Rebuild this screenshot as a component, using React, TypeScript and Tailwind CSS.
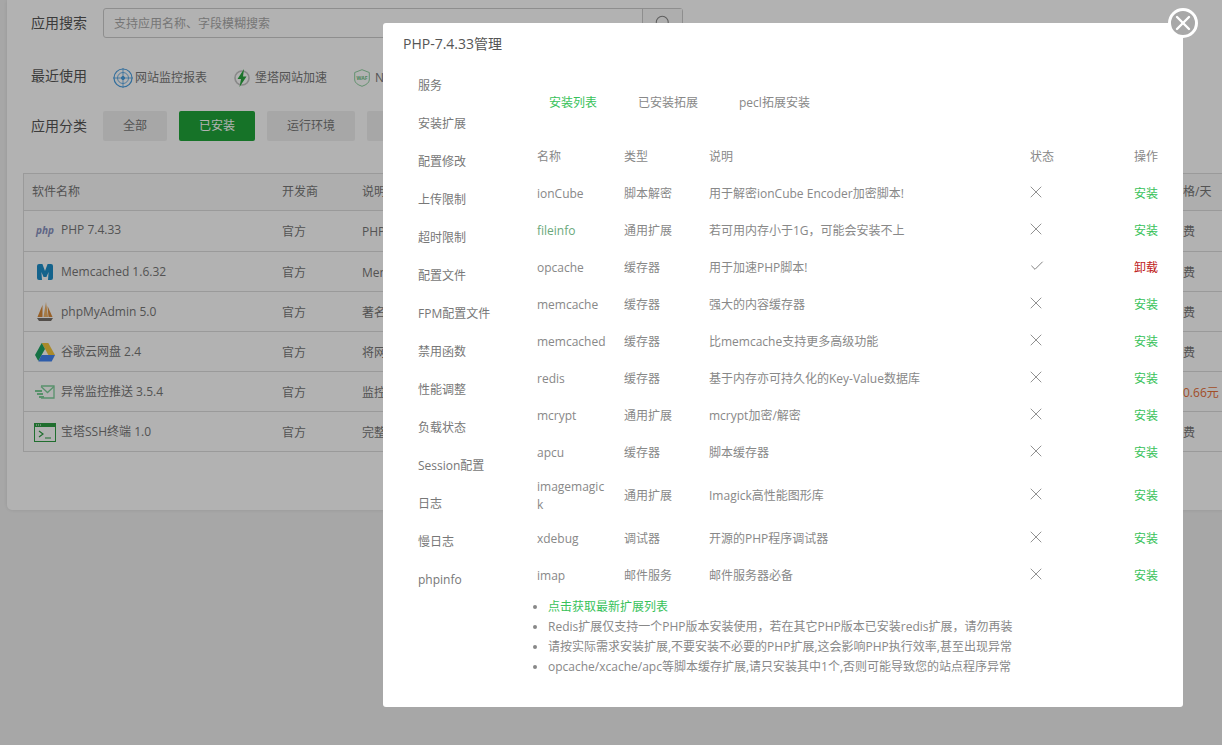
import { Check, Search, X } from 'lucide-react';

const menu = ['服务', '安装扩展', '配置修改', '上传限制', '超时限制', '配置文件', 'FPM配置文件', '禁用函数', '性能调整', '负载状态', 'Session配置', '日志', '慢日志', 'phpinfo'];

const exts = [
  { name: 'ionCube', type: '脚本解密', desc: '用于解密ionCube Encoder加密脚本!', on: false },
  { name: 'fileinfo', type: '通用扩展', desc: '若可用内存小于1G，可能会安装不上', on: false },
  { name: 'opcache', type: '缓存器', desc: '用于加速PHP脚本!', on: true },
  { name: 'memcache', type: '缓存器', desc: '强大的内容缓存器', on: false },
  { name: 'memcached', type: '缓存器', desc: '比memcache支持更多高级功能', on: false },
  { name: 'redis', type: '缓存器', desc: '基于内存亦可持久化的Key-Value数据库', on: false },
  { name: 'mcrypt', type: '通用扩展', desc: 'mcrypt加密/解密', on: false },
  { name: 'apcu', type: '缓存器', desc: '脚本缓存器', on: false },
  { name: 'imagemagick', type: '通用扩展', desc: 'Imagick高性能图形库', on: false },
  { name: 'xdebug', type: '调试器', desc: '开源的PHP程序调试器', on: false },
  { name: 'imap', type: '邮件服务', desc: '邮件服务器必备', on: false },
];

const PhpIcon = () => <span className="text-[10px] leading-none font-bold italic text-[#8892bf]">php</span>;

const MemIcon = () => (
  <svg width="16" height="16" viewBox="0 0 16 16">
    <path d="M2 0h3.4L8 7l2.6-7H14q2 0 2 2v12q0 2-2 2h-3l.6-8L9.4 13H6.6L4.4 8l.6 8H2q-2 0-2-2V2q0-2 2-2z" fill="#1d8ec9" />
  </svg>
);

const SailIcon = () => (
  <svg width="16" height="20" viewBox="0 0 16 20">
    <path d="M5.5 3 0.5 15h5z" fill="#d98a3a" />
    <path d="M9 0 6.5 15H11z" fill="#eeb065" />
    <path d="M10.5 4l5 11h-4z" fill="#d98a3a" />
    <path d="M0 16h16l-2 3H2z" fill="#77706a" />
  </svg>
);

const DriveIcon = () => (
  <svg width="20" height="19" viewBox="0 0 20 19">
    <path d="M6.7 0h6.6L20 12h-6.6z" fill="#f4c63d" />
    <path d="M6.7 0 0 12l3.3 6L10 6z" fill="#1fa463" />
    <path d="M6.5 12H20l-3.3 6.5H3.3z" fill="#4285f4" />
  </svg>
);

const MailIcon = () => (
  <svg width="20" height="17" viewBox="0 0 20 17" fill="none">
    <path d="M6 2h13v12H6" stroke="#7fd09a" strokeWidth="1.3" />
    <path d="M6 2.5l6.5 6 6.5-6" stroke="#7fd09a" strokeWidth="1.3" />
    <path d="M0 7h7M2 10h6M4 13h5" stroke="#7fd09a" strokeWidth="2" />
  </svg>
);

const TermIcon = () => (
  <svg width="22" height="19" viewBox="0 0 22 19" fill="none">
    <rect x=".5" y=".5" width="21" height="18" stroke="#2f9e44" fill="#fff" />
    <rect x="0" y="0" width="22" height="4" fill="#2f9e44" />
    <path d="M2 2h1M4 2h1M6 2h1" stroke="#fff" />
    <path d="M5 8l4 3-4 3M11 15h6" stroke="#2f9e44" strokeWidth="1.2" />
  </svg>
);

const RadarIcon = () => (
  <svg width="20" height="20" viewBox="0 0 20 20" fill="none" stroke="#4a9fe0">
    <circle cx="10" cy="10" r="9" strokeWidth="1.2" />
    <circle cx="10" cy="10" r="5.5" strokeWidth=".8" />
    <circle cx="10" cy="10" r="1.6" fill="#4a9fe0" />
    <path d="M0 10h20M10 0v20" strokeWidth=".8" />
  </svg>
);

const BoltIcon = () => (
  <svg width="16" height="18" viewBox="0 0 16 18" fill="none">
    <circle cx="8" cy="9" r="7" stroke="#c4c4c4" strokeWidth="1.6" />
    <path d="M10 0 3.5 10H7l-1.5 8L12.5 7.5H9z" fill="#2aa63f" />
  </svg>
);

const WafIcon = () => (
  <svg width="16" height="18" viewBox="0 0 16 18" fill="none">
    <path d="M8 .7 15.3 3.5v7.5Q15 15 8 17.3 1 15 .7 11V3.5z" stroke="#8fd0a0" />
    <text x="8" y="11" textAnchor="middle" fontSize="5" fontWeight="700" fill="#6cbf83">WAF</text>
  </svg>
);

const softRows = [
  { icon: <PhpIcon />, name: 'PHP 7.4.33', desc: 'PHP是世界上最好的编程语言', price: '免费', h: 'h-[41px]', pad: 'pb-[2px]' },
  { icon: <MemIcon />, name: 'Memcached 1.6.32', desc: 'Memcached 是一个高性能的分布式内存对象缓存系统', price: '免费', h: 'h-[40px]', pad: 'pt-px' },
  { icon: <SailIcon />, name: 'phpMyAdmin 5.0', desc: '著名Web端MySQL管理工具', price: '免费', h: 'h-[40px]', pad: 'pt-px' },
  { icon: <DriveIcon />, name: '谷歌云网盘 2.4', desc: '将网站或数据库打包备份到谷歌云网盘', price: '免费', h: 'h-[40px]', pad: 'pt-px' },
  { icon: <MailIcon />, name: '异常监控推送 3.5.4', desc: '监控服务器异常并推送通知', price: '￥0.66元', red: true, h: 'h-[40px]', pad: 'pt-px' },
  { icon: <TermIcon />, name: '宝塔SSH终端 1.0', desc: '完整功能的SSH客户端', price: '免费', h: 'h-[40px]', pad: 'pt-px' },
];

export default function App() {
  return (
    <div className="relative h-[745px] w-[1222px] overflow-hidden bg-[#f0f0f0] pl-[7px] font-['Open_Sans','Noto_Sans_CJK_SC',sans-serif] text-xs text-[#777]">
      {/* page behind the dialog */}
      <div className="h-[510px] w-[1300px] rounded-b-[5px] bg-white pt-2 pl-6 shadow-[0_0_4px_rgba(0,0,0,0.1)]">
        <div className="flex h-[30px] items-center">
          <span className="w-[72px] text-sm text-[#555]">应用搜索</span>
          <div className="flex h-[30px] w-[580px] rounded-[3px] border border-[#ccc]">
            <input className="min-w-0 flex-1 pt-px pl-[10px] text-xs outline-none placeholder:text-[#aaa]" placeholder="支持应用名称、字段模糊搜索" />
            <div className="flex w-[40px] items-center justify-center border-l border-[#ccc] bg-[#fafafa]">
              <Search size={18} strokeWidth={1.4} color="#888" />
            </div>
          </div>
        </div>

        <div className="mt-[23px] flex h-[30px] items-center">
          <span className="w-[72px] text-sm text-[#555]">最近使用</span>
          <div className="ml-[10px] flex gap-[27px] pt-1">
            <span className="flex items-center gap-[2px]"><RadarIcon />网站监控报表</span>
            <span className="flex items-center gap-[5px]"><BoltIcon />堡塔网站加速</span>
            <span className="flex items-center gap-[5px]"><WafIcon />Nginx防火墙</span>
          </div>
        </div>

        <div className="mt-5 flex h-[30px] items-center">
          <span className="w-[72px] text-sm text-[#555]">应用分类</span>
          <div className="flex gap-3">
            <span className="flex h-[30px] w-[64px] items-center justify-center rounded-[2px] bg-[#f0f0f0]">全部</span>
            <span className="flex h-[30px] w-[76px] items-center justify-center rounded-[2px] bg-[#20a53a] text-white">已安装</span>
            <span className="flex h-[30px] w-[88px] items-center justify-center rounded-[2px] bg-[#f0f0f0]">运行环境</span>
            <span className="flex h-[30px] w-[88px] items-center justify-center rounded-[2px] bg-[#f0f0f0]">系统工具</span>
          </div>
        </div>

        <div className="mt-8 -ml-2 border-t border-l border-[#ddd]">
          <div className="flex h-[37px] items-center border-b border-[#ddd] bg-[#f9f9f9] pl-2">
            <span className="w-[250px]">软件名称</span>
            <span className="w-[80px]">开发商</span>
            <span className="w-[809px]">说明</span>
            <span>价格/天</span>
          </div>
          {softRows.map((row) => (
            <div key={row.name} className={`flex items-center border-b border-[#ddd] pl-2 ${row.h}`}>
              <span className={`flex w-[250px] items-center ${row.pad}`}>
                <span className="mr-[3px] flex w-[26px] justify-center">{row.icon}</span>
                {row.name}
              </span>
              <span className="w-[80px] pt-[2px]">官方</span>
              <span className="w-[809px] pt-[2px]">{row.desc}</span>
              <span className={`pt-[2px] ${row.red ? 'text-[#e8703a]' : ''}`}>{row.price}</span>
            </div>
          ))}
        </div>
      </div>

      {/* shade */}
      <div className="absolute inset-0 bg-black/30" />

      {/* dialog */}
      <div className="absolute top-[23px] left-[383px] h-[684px] w-[800px] rounded-[3px] bg-white text-[#888]">
        <div className="flex h-[43px] items-center pb-px pl-5 text-sm text-[#555]">PHP-7.4.33管理</div>
        <div className="flex">
          <div className="w-[146px] pt-px pl-[35px]">
            {menu.map((item) => (
              <div key={item} className="flex h-[38px] items-center text-[#777]">{item}</div>
            ))}
          </div>
          <div className="w-[637px]">
            <div className="flex h-[72px] items-center gap-px pt-[2px]">
              <span className="px-5 text-[#38c25a]">安装列表</span>
              <span className="px-5">已安装拓展</span>
              <span className="px-5">pecl拓展安装</span>
            </div>
            <table className="w-[637px] table-fixed">
              <colgroup>
                <col className="w-[87px]" />
                <col className="w-[85px]" />
                <col className="w-[321px]" />
                <col className="w-[72px]" />
                <col />
              </colgroup>
              <thead>
                <tr className="h-[37px] text-left">
                  <th className="px-2 font-normal">名称</th>
                  <th className="px-2 font-normal">类型</th>
                  <th className="px-2 font-normal">说明</th>
                  <th className="px-2 font-normal">状态</th>
                  <th className="px-2 text-right font-normal">操作</th>
                </tr>
              </thead>
              <tbody>
                {exts.map((e) => (
                  <tr key={e.name} className="h-[37px]">
                    <td className={`px-2 py-[6.5px] leading-[18px] break-all ${e.name === 'fileinfo' ? 'text-[#6aa87a]' : ''}`}>{e.name}</td>
                    <td className="px-2">{e.type}</td>
                    <td className="px-2">{e.desc}</td>
                    <td className="px-2 pb-[3px]">
                      {e.on ? <Check size={16} strokeWidth={1.4} color="#777" className="-ml-px" /> : <X size={20} strokeWidth={1.1} className="-ml-[4px]" />}
                    </td>
                    <td className={`px-2 text-right ${e.on ? 'text-[#c02020]' : 'text-[#38c25a]'}`}>{e.on ? '卸载' : '安装'}</td>
                  </tr>
                ))}
              </tbody>
            </table>
            <ul className="mt-[3px] list-disc pl-[19px] leading-5 whitespace-nowrap marker:text-[#888]">
              <li className="text-[#38c25a]">点击获取最新扩展列表</li>
              <li>Redis扩展仅支持一个PHP版本安装使用，若在其它PHP版本已安装redis扩展，请勿再装</li>
              <li>请按实际需求安装扩展,不要安装不必要的PHP扩展,这会影响PHP执行效率,甚至出现异常</li>
              <li>opcache/xcache/apc等脚本缓存扩展,请只安装其中1个,否则可能导致您的站点程序异常</li>
            </ul>
          </div>
        </div>
      </div>

      {/* close button */}
      <div className="absolute top-2 left-[1168px] flex h-[30px] w-[30px] items-center justify-center rounded-full border-[3px] border-white bg-[#a8a8a8]">
        <X size={26} strokeWidth={2.4} color="#fff" />
      </div>
    </div>
  );
}
